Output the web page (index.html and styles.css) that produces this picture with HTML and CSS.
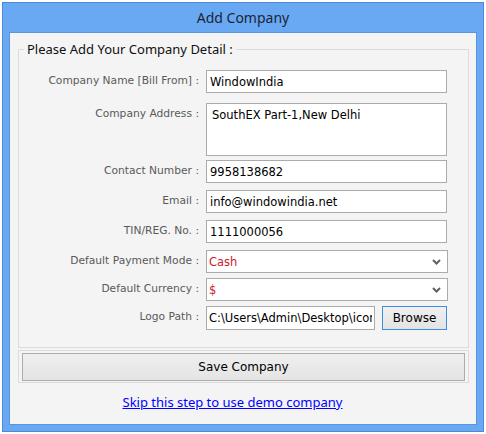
FILE: index.html
```html
<!DOCTYPE html>
<html>

<head>
    <meta charset="UTF-8" />
    <title>Add Company</title>
    <link rel="stylesheet" href="styles.css">
</head>

<body>
    <div class="window">
        <div class="title-bar">Add Company</div>
        <div class="panel">
            <fieldset class="details">
                <legend>Please Add Your Company Detail :</legend>
                <div class="form-grid">
                    <label for="company-name">Company Name [Bill From] :</label>
                    <input type="text" id="company-name" value="WindowIndia" />

                    <label for="company-address">Company Address :</label>
                    <textarea id="company-address">SouthEX Part-1,New Delhi</textarea>

                    <label for="contact-number">Contact Number :</label>
                    <input type="text" id="contact-number" value="9958138682" />

                    <label for="email">Email :</label>
                    <input type="text" id="email" value="info@windowindia.net" />

                    <label for="tin">TIN/REG. No. :</label>
                    <input type="text" id="tin" value="1111000056" />

                    <label for="payment-mode">Default Payment Mode :</label>
                    <div class="select-box">
                        <select id="payment-mode">
                            <option>Cash</option>
                            <option>Cheque</option>
                            <option>Credit</option>
                        </select>
                        <svg class="chevron" width="9" height="6" viewBox="0 0 9 6">
                            <path d="M1 1 L4.5 4.5 L8 1" fill="none" stroke="#606060" stroke-width="2" />
                        </svg>
                    </div>

                    <label for="currency">Default Currency :</label>
                    <div class="select-box">
                        <select id="currency">
                            <option>$</option>
                            <option>&#8377;</option>
                            <option>&euro;</option>
                        </select>
                        <svg class="chevron" width="9" height="6" viewBox="0 0 9 6">
                            <path d="M1 1 L4.5 4.5 L8 1" fill="none" stroke="#606060" stroke-width="2" />
                        </svg>
                    </div>

                    <label for="logo-path">Logo Path :</label>
                    <div class="logo-row">
                        <input type="text" id="logo-path" value="C:\Users\Admin\Desktop\icon.png" />
                        <button class="browse-btn">Browse</button>
                    </div>
                </div>
            </fieldset>

            <div class="save-box">
                <button class="save-btn">Save Company</button>
            </div>

            <div class="skip">
                <a href="#">Skip this step to use demo company</a>
            </div>
        </div>
    </div>
</body>

</html>
```

FILE: styles.css
```css
* {
    box-sizing: border-box;
}

body {
    font-family: "DejaVu Sans", Tahoma, sans-serif;
    font-size: 10.7px;
    margin: 0;
    padding: 2px;
    background-color: #fff;
}

.window {
    width: 482px;
    height: 430px;
    border: 1px solid #4f88d3;
    background-color: #69a9f4;
    padding: 0 6px 6px 6px;
    display: flex;
    flex-direction: column;
}

.title-bar {
    height: 29px;
    line-height: 29px;
    text-align: center;
    font-family: "Noto Sans", "Open Sans", sans-serif;
    font-size: 14px;
    color: #1c2433;
}

.panel {
    flex: 1;
    background-color: #f4f4f4;
    border: 1px solid #5b95de;
    padding: 7px 7px 0 8px;
}

.details {
    border: 1px solid #dcdcdc;
    margin: 0;
    padding: 12px 0 17px 0;
}

.details legend {
    font-family: "Noto Sans", "Open Sans", sans-serif;
    font-size: 13px;
    color: #101010;
    padding: 0 3px;
    margin-left: 5px;
}

.form-grid {
    display: grid;
    grid-template-columns: 180px 241px;
    grid-template-rows: 33px 57px 30px 30px 30px 28px 28px 24px;
    column-gap: 7px;
    align-items: start;
}

.form-grid label {
    text-align: right;
    color: #5a5a5a;
    padding-top: 4px;
}

input[type="text"],
textarea,
select {
    font-family: "DejaVu Sans", Tahoma, sans-serif;
    font-size: 11.5px;
    color: #000;
    background-color: #fff;
    border: 1px solid #ababab;
    border-radius: 0;
    margin: 0;
    outline: none;
}

input[type="text"] {
    width: 241px;
    height: 23px;
    padding: 0 3px;
}

textarea {
    width: 241px;
    height: 53px;
    padding: 4px 5px;
    resize: none;
    overflow: hidden;
}

.select-box {
    position: relative;
    width: 242px;
}

select {
    appearance: none;
    width: 242px;
    height: 23px;
    padding: 0 2px;
    color: #cc1b2b;
}

.chevron {
    position: absolute;
    right: 7px;
    top: 9px;
    pointer-events: none;
}

.logo-row {
    display: flex;
    gap: 7px;
}

.logo-row input[type="text"] {
    width: 169px;
    height: 24px;
    padding: 0 2px;
}

button {
    font-family: "DejaVu Sans", Tahoma, sans-serif;
    color: #000;
    cursor: pointer;
    margin: 0;
}

.browse-btn {
    width: 65px;
    height: 24px;
    font-size: 12px;
    border: 1px solid #3c8ee0;
    background: linear-gradient(#f0f0f0, #e3e3e3);
}

.save-box {
    margin-top: 2px;
    border: 1px solid #dcdcdc;
    padding: 2px 3px 1px 3px;
}

.save-btn {
    width: 100%;
    height: 28px;
    font-size: 12px;
    border: 1px solid #acacac;
    background: linear-gradient(#efefef, #e4e4e4);
}

.skip {
    text-align: center;
    margin-top: 10px;
    padding-right: 22px;
}

.skip a {
    font-family: "Noto Sans", "Open Sans", sans-serif;
    font-size: 13px;
    color: #0000ff;
}
```
